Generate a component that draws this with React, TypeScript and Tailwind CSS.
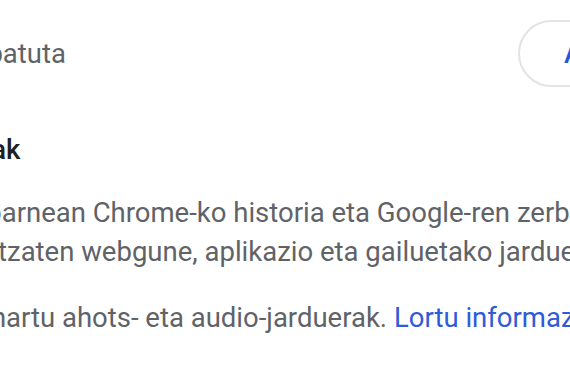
export default function App() {
  return (
    <div className="w-[570px] h-[380px] overflow-hidden bg-white font-['Roboto',sans-serif]">
      {/* Egoera + botoia */}
      <div className="flex items-center justify-between pt-[20px] h-[87px]">
        <span className="ml-[-104px] text-[27.5px] leading-[32px] text-[#5f6368] whitespace-nowrap">
          Desaktibatuta
        </span>
        <button className="shrink-0 mr-[-180px] h-[67px] w-[232px] rounded-full border-2 border-[#e3e3e3] pl-[44px] text-left text-[27.5px] font-medium text-[#1f5bd6]">
          Aktibatu
        </button>
      </div>

      {/* Azpiezarpenak */}
      <h2 className="mt-[47px] ml-[-162px] text-[27.5px] leading-[32px] font-medium text-[#202124] whitespace-nowrap">
        Azpiezarpenak
      </h2>

      <div className="mt-[27px] text-[27.5px] leading-[39px] text-[#5f6368] whitespace-nowrap">
        <p className="ml-[-86px]">Sartu barnean Chrome-ko historia eta Google-ren zerbitzuak</p>
        <p className="ml-[-85px]">darabiltzaten webgune, aplikazio eta gailuetako jarduerak</p>
        <p className="ml-[-118px] mt-[27px]">
          Kontuan hartu ahots- eta audio-jarduerak.{' '}
          <a className="text-[#2f5bd8]">Lortu informazio gehiago</a>
        </p>
      </div>
    </div>
  );
}
